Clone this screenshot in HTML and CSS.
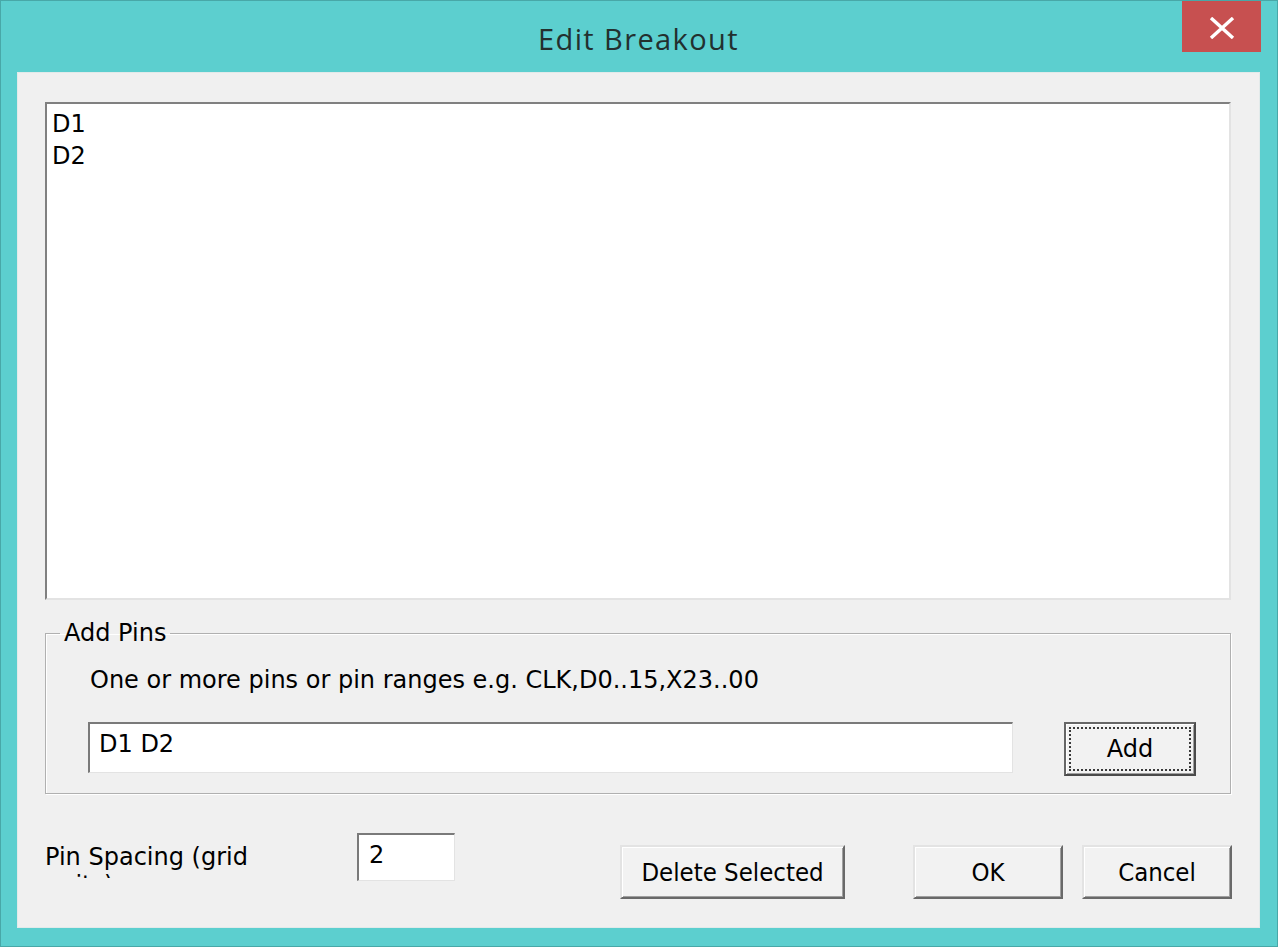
FILE: index.html
```html
<!DOCTYPE html>
<html>
<head>
<meta charset="utf-8">
<title>Edit Breakout</title>
<link rel="stylesheet" href="styles.css">
</head>
<body>
<div class="window">
  <div class="titlebar">
    <div class="spacer"></div>
    <div class="title">Edit Breakout</div>
    <div class="close">
      <svg width="26" height="22" viewBox="0 0 26 22"><path d="M2 1 L24 21 M24 1 L2 21" stroke="#fff" stroke-width="3.4" fill="none"/></svg>
    </div>
  </div>
  <div class="client">
    <div class="listbox">
      <div class="item">D1</div>
      <div class="item">D2</div>
    </div>
    <fieldset class="group">
      <legend class="legend">Add Pins</legend>
      <div class="hint">One or more pins or pin ranges e.g. CLK,D0..15,X23..00</div>
      <div class="addrow">
        <div class="edit">D1 D2</div>
        <div class="btn default"><span class="focus">Add</span></div>
      </div>
    </fieldset>
    <div class="bottomrow">
      <div class="label">Pin Spacing (grid units)</div>
      <div class="spin">2</div>
      <div class="btn del">Delete Selected</div>
      <div class="btn ok">OK</div>
      <div class="btn cancel">Cancel</div>
    </div>
  </div>
</div>
</body>
</html>
```
FILE: styles.css
```css
html, body {
  margin: 0;
  padding: 0;
}
body {
  width: 1278px;
  height: 947px;
  overflow: hidden;
  font-family: "DejaVu Sans", sans-serif;
  font-size: 24px;
  color: #000;
}
.window {
  box-sizing: border-box;
  width: 1278px;
  height: 947px;
  background: #5ccfcf;
  border: 1px solid #48a8a8;
  padding: 0 17px 0 16px;
}
.titlebar {
  height: 71px;
  display: grid;
  grid-template-columns: 1fr auto 1fr;
  align-items: start;
}
.title {
  margin-top: 19px;
  font-family: "Open Sans", "Noto Sans", sans-serif;
  font-size: 29px;
  line-height: 38px;
  letter-spacing: 1.4px;
  color: #23302f;
}
.close {
  justify-self: end;
  width: 79px;
  height: 51px;
  margin-right: -1px;
  background: #c75050;
  display: flex;
  align-items: center;
  justify-content: center;
}
.close svg {
  display: block;
  margin-top: 2px;
}
.client {
  box-sizing: border-box;
  height: 856px;
  background: #f0f0f0;
  border: 1px solid #e2eaea;
  padding: 29px 28px 0 27px;
}
.listbox {
  box-sizing: border-box;
  height: 498px;
  background: #fff;
  border: 2px solid;
  border-color: #808080 #e3e3e3 #e3e3e3 #808080;
  padding: 4px 5px;
  line-height: 32px;
}
.group {
  margin: 19px 0 0;
  padding: 0 34px 17px 42px;
  border: 1px solid #b0b0b0;
  box-shadow: inset 1px 1px 0 #fff, 1px 1px 0 #fff;
  min-width: 0;
}
.legend {
  margin-left: -28px;
  padding: 0 4px;
  line-height: 28px;
}
.hint {
  margin-top: 19px;
  margin-left: 2px;
  line-height: 28px;
}
.addrow {
  margin-top: 28px;
  display: flex;
  align-items: flex-start;
  gap: 51px;
}
.edit {
  box-sizing: border-box;
  width: 925px;
  height: 51px;
  flex-shrink: 0;
  background: #fff;
  border-style: solid;
  border-width: 2px 1px 1px 2px;
  border-color: #7a7a7a #e3e3e3 #e3e3e3 #7a7a7a;
  padding: 4px 9px 0;
  line-height: 32px;
}
.btn {
  box-sizing: border-box;
  height: 54px;
  flex-shrink: 0;
  background: #f2f2f2;
  border: 2px solid;
  border-color: #e3e3e3 #696969 #696969 #e3e3e3;
  box-shadow: inset 1px 1px 0 #fff, inset -1px -1px 0 #a0a0a0;
  display: flex;
  align-items: center;
  justify-content: center;
  font-family: "DejaVu Sans Condensed", "DejaVu Sans", sans-serif;
  font-size: 25.5px;
  line-height: 28px;
}
.btn.default {
  width: 132px;
  border-color: #666 #4a4a4a #4a4a4a #666;
  padding: 3px;
  align-items: stretch;
  font-family: "DejaVu Sans", sans-serif;
  font-size: 24px;
}
.focus {
  flex: 1;
  border: 2px dotted #3a3a3a;
  display: flex;
  align-items: center;
  justify-content: center;
}
.bottomrow {
  margin-top: 39px;
  display: flex;
  align-items: flex-start;
}
.label {
  width: 240px;
  height: 35px;
  flex-shrink: 0;
  margin-top: 10px;
  overflow: hidden;
  line-height: 28px;
}
.spin {
  box-sizing: border-box;
  width: 98px;
  height: 48px;
  flex-shrink: 0;
  margin-left: 72px;
  background: #fff;
  border-style: solid;
  border-width: 2px 1px 1px 2px;
  border-color: #7a7a7a #e3e3e3 #e3e3e3 #7a7a7a;
  padding: 4px 10px 0;
  line-height: 32px;
}
.btn.del {
  width: 225px;
  margin-left: 165px;
  margin-top: 12px;
}
.btn.ok {
  width: 150px;
  margin-left: 68px;
  margin-top: 12px;
}
.btn.cancel {
  width: 150px;
  margin-left: 19px;
  margin-top: 12px;
}
```
